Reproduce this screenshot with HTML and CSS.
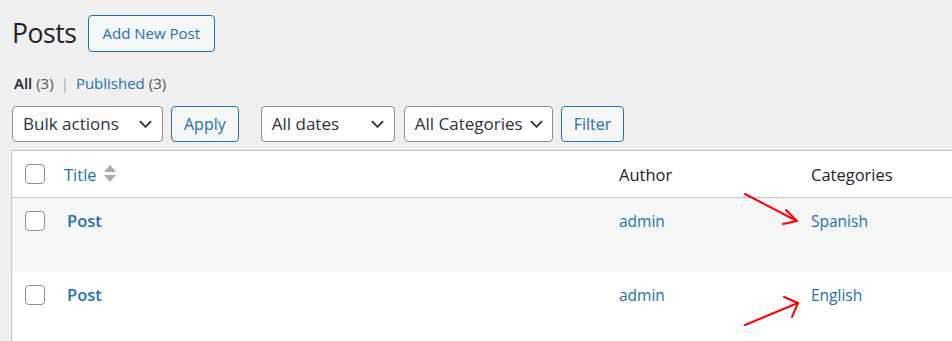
FILE: index.html
```html
<!DOCTYPE html>
<html>
<head>
<meta charset="utf-8">
<link rel="stylesheet" href="styles.css">
</head>
<body>
<div class="wrap">
  <div class="head">
    <h1 class="title">Posts</h1>
    <a class="btn-outline">Add New Post</a>
  </div>
  <ul class="subsubsub">
    <li class="current">All <span class="count">(3)</span></li>
    <li class="sep">|</li>
    <li><a>Published <span class="count">(3)</span></a></li>
  </ul>
  <div class="tablenav">
    <div class="select w-bulk">Bulk actions<svg class="chev" viewBox="0 0 14 8"><path d="M1 1l6 6 6-6" /></svg></div>
    <button class="btn">Apply</button>
    <div class="select w-dates">All dates<svg class="chev" viewBox="0 0 14 8"><path d="M1 1l6 6 6-6" /></svg></div>
    <div class="select w-cats">All Categories<svg class="chev" viewBox="0 0 14 8"><path d="M1 1l6 6 6-6" /></svg></div>
    <button class="btn">Filter</button>
  </div>
</div>
<div class="table">
  <div class="row header">
    <div class="cb"><span class="box"></span></div>
    <div class="c-title"><a>Title</a><svg class="sort" viewBox="0 0 12 18"><path d="M6 0l6 7H0z" /><path d="M0 10h12l-6 7z" /></svg></div>
    <div class="c-author">Author</div>
    <div class="c-cats">Categories</div>
  </div>
  <div class="row alt">
    <div class="cb"><span class="box"></span></div>
    <div class="c-title"><a class="post">Post</a></div>
    <div class="c-author"><a>admin</a></div>
    <div class="c-cats"><a>Spanish</a></div>
  </div>
  <div class="row">
    <div class="cb"><span class="box"></span></div>
    <div class="c-title"><a class="post">Post</a></div>
    <div class="c-author"><a>admin</a></div>
    <div class="c-cats"><a>English</a></div>
  </div>
</div>
<svg class="arrows" width="952" height="341" viewBox="0 0 952 341">
  <g fill="none" stroke="#ff0000" stroke-width="2" stroke-linecap="round" stroke-linejoin="round">
    <path d="M745 194L797 221" />
    <path d="M786 210L797 221L783 224" />
    <path d="M745 325L798 303" />
    <path d="M784 297L798 303L792 317" />
  </g>
</svg>
</body>
</html>
```
FILE: styles.css
```css
html, body {
  margin: 0;
  padding: 0;
}
body {
  background: #f0f0f1;
  font-family: "Open Sans", "Noto Sans", sans-serif;
  color: #1d2327;
  width: 952px;
  height: 341px;
  overflow: hidden;
  position: relative;
}
a { color: #2271b1; text-decoration: none; }
.wrap {
  padding: 15px 0 0 12px;
}
.head {
  display: flex;
  align-items: center;
  gap: 11px;
  height: 37px;
}
.title {
  margin: 0;
  font-size: 26.5px;
  font-weight: 400;
  line-height: 37px;
  letter-spacing: -0.4px;
}
.btn-outline {
  box-sizing: border-box;
  height: 37px;
  border: 1px solid #2271b1;
  border-radius: 4px;
  background: #f6f7f7;
  padding: 0 14px;
  font-size: 15px;
  line-height: 35px;
  color: #2271b1;
}
.subsubsub {
  list-style: none;
  margin: 0;
  padding: 0 0 0 2px;
  display: flex;
  gap: 6px;
  margin-top: 20px;
  font-size: 15px;
  line-height: 22px;
  height: 22px;
}
.subsubsub .current { font-weight: 600; color: #1d2327; }
.subsubsub .count { font-weight: 400; color: #50575e; }
.subsubsub .sep { color: #a7aaad; padding: 0 1px; }
.subsubsub a .count { color: #50575e; }
.tablenav {
  display: flex;
  align-items: center;
  margin-top: 12px;
  height: 36px;
}
.select {
  box-sizing: border-box;
  height: 36px;
  border: 1px solid #8c8f94;
  border-radius: 4px;
  background: #fff;
  padding: 0 10px 0 10px;
  font-size: 17px;
  line-height: 34px;
  display: flex;
  align-items: center;
  justify-content: space-between;
  color: #2c3338;
}
.chev {
  width: 13px;
  height: 8px;
  fill: none;
  stroke: #2c3338;
  stroke-width: 2;
}
.w-bulk { width: 151px; margin-right: 8px; }
.w-dates { width: 134px; margin-left: 22px; margin-right: 9px; }
.w-cats { width: 149px; margin-right: 8px; padding-right: 9px; }
.btn {
  box-sizing: border-box;
  height: 36px;
  border: 1px solid #2271b1;
  border-radius: 4px;
  background: #f6f7f7;
  color: #2271b1;
  font-family: inherit;
  font-size: 16px;
  padding: 0 12px;
  margin: 0;
}
.table {
  margin: 8px 0 0 11px;
  width: 941px;
  box-sizing: border-box;
  border: 1px solid #c3c4c7;
  border-right: none;
  background: #fff;
  font-size: 16.5px;
}
.row {
  display: grid;
  grid-template-columns: 52px 555px 192px 1fr;
  height: 74px;
}
.row.header {
  height: 46px;
  border-bottom: 1px solid #c3c4c7;
  align-items: center;
}
.row.alt { background: #f6f7f7; height: 74px; }
.row:not(.header) { padding-top: 11px; box-sizing: border-box; }
.cb {
  padding-left: 13px;
}
.row:not(.header) .cb { padding-top: 2px; }
.box {
  display: block;
  box-sizing: border-box;
  width: 20px;
  height: 20px;
  border: 1px solid #8c8f94;
  border-radius: 4px;
  background: #fff;
}
.c-title { display: flex; align-items: center; gap: 7px; }
.row:not(.header) .c-title { align-items: flex-start; padding-left: 3px; }
.sort { width: 12px; height: 18px; fill: #a7aaad; }
.post { font-weight: 600; }
.row:not(.header) .c-author, .row:not(.header) .c-cats { font-size: 15.5px; line-height: 24px; }
.row:not(.header) .c-title { line-height: 24px; }
.c-author, .c-cats { color: #1d2327; }
.arrows {
  position: absolute;
  left: 0;
  top: 0;
  pointer-events: none;
}
```
